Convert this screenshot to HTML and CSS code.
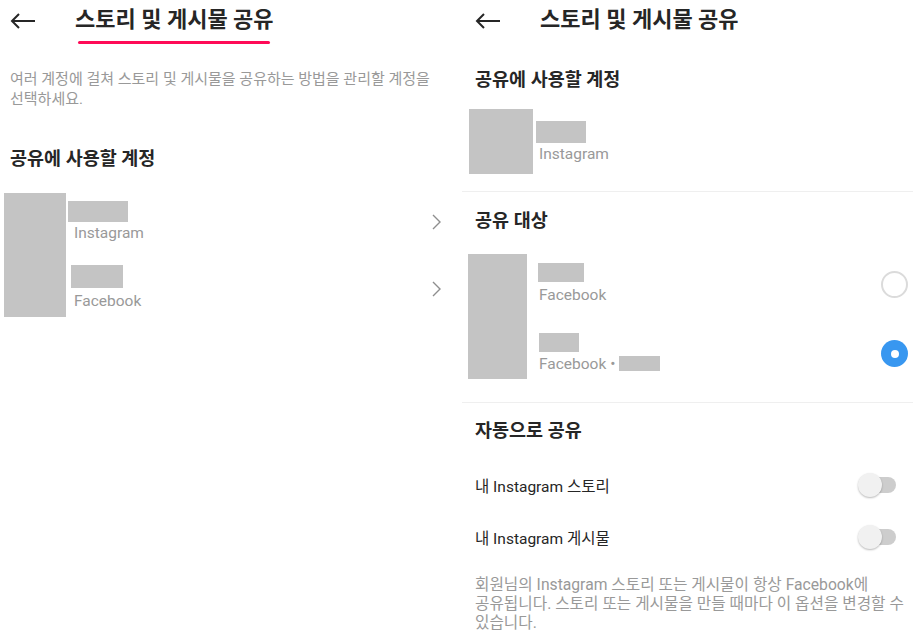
FILE: index.html
```html
<!DOCTYPE html>
<html lang="ko">
<head>
<meta charset="utf-8">
<title>스토리 및 게시물 공유</title>
<link rel="stylesheet" href="styles.css">
</head>
<body>
<div class="screens">
  <section class="panel panel-left">
    <header class="topbar">
      <svg class="back" viewBox="0 0 26 16" aria-hidden="true"><path d="M25 8H2M9 1L2 8l7 7" fill="none" stroke="#262626" stroke-width="2" stroke-linejoin="miter"/></svg>
      <h1 class="title title-marked">스토리 및 게시물 공유</h1>
    </header>
    <p class="desc">여러 계정에 걸쳐 스토리 및 게시물을 공유하는 방법을 관리할 계정을 선택하세요.</p>
    <h2 class="sec-title sec-left">공유에 사용할 계정</h2>
    <div class="acct acct-left">
      <div class="avatar av-left"></div>
      <div class="acct-rows">
        <div class="acct-row lrow-1">
          <div class="acct-text">
            <div class="name-block nb-l1"></div>
            <div class="acct-sub sub-l1">Instagram</div>
          </div>
          <svg class="chev" viewBox="0 0 9 16" aria-hidden="true"><path d="M1 1l7 7-7 7" fill="none" stroke="#8e8e8e" stroke-width="1.4"/></svg>
        </div>
        <div class="acct-row lrow-2">
          <div class="acct-text">
            <div class="name-block nb-l2"></div>
            <div class="acct-sub sub-l2">Facebook</div>
          </div>
          <svg class="chev" viewBox="0 0 9 16" aria-hidden="true"><path d="M1 1l7 7-7 7" fill="none" stroke="#8e8e8e" stroke-width="1.4"/></svg>
        </div>
      </div>
    </div>
  </section>

  <section class="panel panel-right">
    <header class="topbar">
      <svg class="back" viewBox="0 0 26 16" aria-hidden="true"><path d="M25 8H2M9 1L2 8l7 7" fill="none" stroke="#262626" stroke-width="2"/></svg>
      <h1 class="title">스토리 및 게시물 공유</h1>
    </header>
    <h2 class="sec-title sec-r1">공유에 사용할 계정</h2>
    <div class="acct acct-ig">
      <div class="avatar av-ig"></div>
      <div class="acct-text">
        <div class="name-block nb-r1"></div>
        <div class="acct-sub sub-r1">Instagram</div>
      </div>
    </div>
    <div class="divider div-1"></div>
    <h2 class="sec-title sec-r2">공유 대상</h2>
    <div class="acct acct-fb">
      <div class="avatar av-fb"></div>
      <div class="acct-rows fb-rows">
        <div class="acct-row rrow-1">
          <div class="acct-text">
            <div class="name-block nb-r2"></div>
            <div class="acct-sub sub-r2">Facebook</div>
          </div>
          <span class="radio"></span>
        </div>
        <div class="acct-row rrow-2">
          <div class="acct-text">
            <div class="name-block nb-r3"></div>
            <div class="acct-sub sub-r3">Facebook • <span class="inline-block"></span></div>
          </div>
          <span class="radio radio-on"></span>
        </div>
      </div>
    </div>
    <div class="divider div-2"></div>
    <h2 class="sec-title sec-r3">자동으로 공유</h2>
    <div class="toggle-list">
      <div class="toggle-row">
        <span class="toggle-label">내 Instagram 스토리</span>
        <span class="switch"><span class="track"></span><span class="knob"></span></span>
      </div>
      <div class="toggle-row">
        <span class="toggle-label">내 Instagram 게시물</span>
        <span class="switch"><span class="track"></span><span class="knob"></span></span>
      </div>
    </div>
    <p class="note">회원님의 Instagram 스토리 또는 게시물이 항상 Facebook에 공유됩니다. 스토리 또는 게시물을 만들 때마다 이 옵션을 변경할 수 있습니다.</p>
  </section>
</div>
</body>
</html>
```

FILE: styles.css
```css
* { box-sizing: border-box; margin: 0; padding: 0; }
body {
  margin: 0;
  background: #fff;
  font-family: Roboto, "Noto Sans CJK KR", sans-serif;
  color: #262626;
  word-break: keep-all;
}
.screens { display: flex; width: 913px; height: 637px; overflow: hidden; }
.panel { display: flex; flex-direction: column; }
.panel-left { width: 460px; }
.panel-right { width: 453px; }

.topbar { display: flex; align-items: center; height: 40px; flex: none; }
.panel-left .topbar { padding-left: 10px; }
.panel-right .topbar { padding-left: 15px; }
.back { width: 26px; height: 16px; margin-right: 39px; flex: none; margin-top: 2px; }
.title {
  font-size: 22px;
  font-weight: 700;
  line-height: 28px;
  color: #262626;
}
.title-marked { position: relative; }
.title-marked::after {
  content: "";
  position: absolute;
  left: 3px;
  right: 4px;
  top: 35px;
  height: 3px;
  border-radius: 2px;
  background: #ff0a57;
}

.desc {
  margin-top: 29px;
  padding: 0 12px 0 10px;
  font-size: 15px;
  line-height: 20px;
  color: #999;
}

.sec-title {
  font-size: 18.5px;
  font-weight: 700;
  line-height: 22px;
  color: #262626;
}
.sec-left { margin-top: 39px; padding-left: 10px; }
.sec-r1 { margin-top: 29px; padding-left: 15px; }
.sec-r2 { margin-top: 18px; padding-left: 15px; }
.sec-r3 { margin-top: 17px; padding-left: 15px; }

.acct { display: flex; align-items: flex-start; }
.avatar { background: #c4c4c4; flex: none; }
.name-block { background: #c4c4c4; }
.acct-rows { flex: 1; display: flex; flex-direction: column; }
.acct-row { display: flex; align-items: center; justify-content: space-between; }
.acct-sub { font-size: 15.5px; line-height: 20px; color: #999; }

/* left account block */
.acct-left { margin-top: 23px; padding-right: 19px; }
.av-left { width: 62px; height: 124px; margin-left: 4px; }
.lrow-1 { margin-top: 8px; }
.nb-l1 { width: 60px; height: 21px; margin-left: 2px; }
.sub-l1 { margin-left: 8px; margin-top: 1px; }
.lrow-2 { margin-top: 22px; }
.nb-l2 { width: 52px; height: 23px; margin-left: 5px; }
.sub-l2 { margin-left: 8px; margin-top: 2px; line-height: 22px; }
.chev { width: 9px; height: 16px; flex: none; }

/* right: instagram account */
.acct-ig { margin-top: 18px; }
.av-ig { width: 64px; height: 65px; margin-left: 9px; }
.nb-r1 { width: 50px; height: 22px; margin-left: 3px; margin-top: 12px; }
.sub-r1 { margin-left: 6px; margin-top: 1px; }

.divider { height: 1px; background: #efefef; margin-left: 2px; }
.div-1 { margin-top: 17px; }
.div-2 { margin-top: 23px; }

/* right: facebook targets */
.acct-fb { margin-top: 22px; }
.av-fb { width: 59px; height: 125px; margin-left: 8px; }
.fb-rows { padding-right: 5px; }
.rrow-1 { margin-top: 9px; }
.nb-r2 { width: 46px; height: 19px; margin-left: 11px; }
.sub-r2 { margin-left: 12px; margin-top: 3px; }
.rrow-2 { margin-top: 28px; }
.nb-r3 { width: 40px; height: 19px; margin-left: 12px; }
.sub-r3 { margin-left: 12px; margin-top: 2px; }
.inline-block {
  display: inline-block;
  width: 41px;
  height: 15px;
  background: #c4c4c4;
  vertical-align: -2px;
}

.radio {
  width: 27px;
  height: 27px;
  border-radius: 50%;
  border: 2px solid #dbdbdb;
  flex: none;
  display: flex;
  align-items: center;
  justify-content: center;
}
.radio-on { border: none; background: #3897f0; }
.radio-on::after {
  content: "";
  width: 8px;
  height: 8px;
  border-radius: 50%;
  background: #fff;
}

/* toggles */
.toggle-list { margin-top: 17px; }
.toggle-row {
  height: 52px;
  display: flex;
  align-items: center;
  justify-content: space-between;
  padding: 0 17px 0 15px;
}
.toggle-label { font-size: 15.5px; color: #262626; }
.switch { position: relative; width: 38px; height: 24px; flex: none; }
.track {
  position: absolute;
  right: 0;
  top: 4px;
  width: 34px;
  height: 16px;
  border-radius: 8px;
  background: #cdcdcd;
}
.knob {
  position: absolute;
  left: 0;
  top: 0;
  width: 24px;
  height: 24px;
  border-radius: 50%;
  background: #f1f1f1;
  box-shadow: 0 1px 2px rgba(0, 0, 0, 0.28);
}

.note {
  margin-top: 12px;
  padding: 0 1px 0 15px;
  font-size: 15.7px;
  line-height: 19px;
  color: #999;
}
```
